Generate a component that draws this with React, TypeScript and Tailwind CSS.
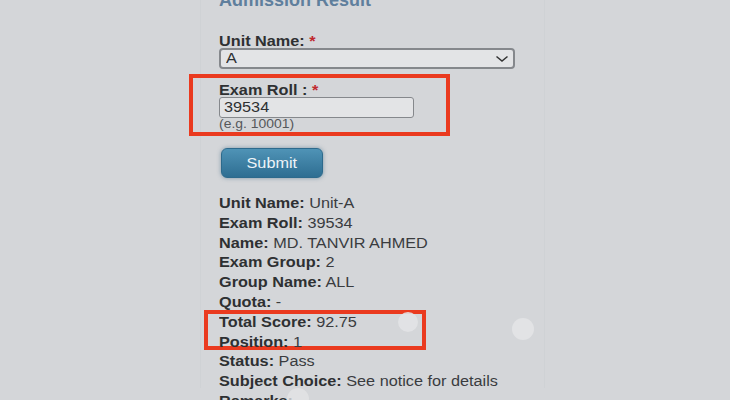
import React from "react";

const results: { label: string; value: string }[] = [
  { label: "Unit Name:", value: "Unit-A" },
  { label: "Exam Roll:", value: "39534" },
  { label: "Name:", value: "MD. TANVIR AHMED" },
  { label: "Exam Group:", value: "2" },
  { label: "Group Name:", value: "ALL" },
  { label: "Quota:", value: "-" },
  { label: "Total Score:", value: "92.75" },
  { label: "Position:", value: "1" },
  { label: "Status:", value: "Pass" },
  { label: "Subject Choice:", value: "See notice for details" },
  { label: "Remarks:", value: "" },
];

// the screenshot is stretched sideways a little, so text gets a horizontal scale
const wide = "inline-block origin-left scale-x-[1.16] whitespace-nowrap";

export default function App() {
  return (
    <div
      className="relative w-[730px] h-[400px] overflow-hidden bg-[#d4d6d9] text-[#2e3032]"
      style={{ fontFamily: '"Liberation Sans", Arial, sans-serif' }}
    >
      <div className="ml-[200px] w-[345px] h-full border-x border-[#cfd2d5] pl-[18px]">
        <div className="-mt-[12px] text-[18px] leading-[24px] font-bold text-[#5f7f9d]">
          Admission Result
        </div>

        <div className="mt-[21px] text-[14px] leading-[16px] font-bold">
          <span className={wide}>
            Unit Name: <span className="text-[#c0282d]">*</span>
          </span>
        </div>
        <div className="mt-[-1px] w-[296px] h-[21px] flex items-center justify-between rounded-[4px] border-2 border-[#85888c] bg-[#e3e4e6] pl-[5px] pr-[4px] text-[14px]">
          <span className={wide}>A</span>
          <svg width="14" height="8" viewBox="0 0 14 8" fill="none">
            <path d="M1.5 1.5 L7 6 L12.5 1.5" stroke="#333" strokeWidth="1.5" />
          </svg>
        </div>

        <div className="relative mt-[13px]">
          <div className="absolute -left-[30px] -top-[8px] w-[261px] h-[62px] border-[4px] border-[#ea3a1f]" />
          <div className="text-[14px] leading-[16px] font-bold">
            <span className={wide}>
              Exam Roll : <span className="text-[#c0282d]">*</span>
            </span>
          </div>
          <div className="mt-[-1px] w-[195px] h-[21px] flex items-center rounded-[3px] border-[1.5px] border-[#85888c] bg-[#e3e4e6] pl-[4px] text-[14px]">
            <span className={wide}>39534</span>
          </div>
          <div className="text-[12px] leading-[13px] text-[#55585b]">
            <span className={wide}>(e.g. 10001)</span>
          </div>
        </div>

        <button className="mt-[17px] ml-[2px] w-[102px] h-[30px] flex items-center justify-center rounded-[6px] border border-[#2d6a8c] bg-gradient-to-b from-[#4f93b6] to-[#2e6e92] text-[14px] text-[#eef4f8] shadow-[0_0_4px_rgba(40,90,120,0.5)]">
          <span className="inline-block scale-x-[1.16]">Submit</span>
        </button>

        <div className="relative mt-[16px] text-[14px] leading-[19.8px]">
          <div className="absolute -left-[15px] top-[116px] w-[222px] h-[40px] border-[4px] border-[#ea3a1f]" />
          {results.map((r, i) => (
            <div key={i}>
              <span className={wide}>
                <span className="font-bold">{r.label}</span>
                {r.value && <span className="text-[#3a3c3f]"> {r.value}</span>}
              </span>
            </div>
          ))}
        </div>
      </div>

      <div className="absolute left-[398px] top-[312px] w-[20px] h-[20px] rounded-full bg-[#e2e3e5]/90" />
      <div className="absolute left-[512px] top-[318px] w-[22px] h-[22px] rounded-full bg-[#e2e3e5]" />
      <div className="absolute left-[287px] top-[388px] w-[22px] h-[22px] rounded-full bg-[#e2e3e5]/80" />
    </div>
  );
}
